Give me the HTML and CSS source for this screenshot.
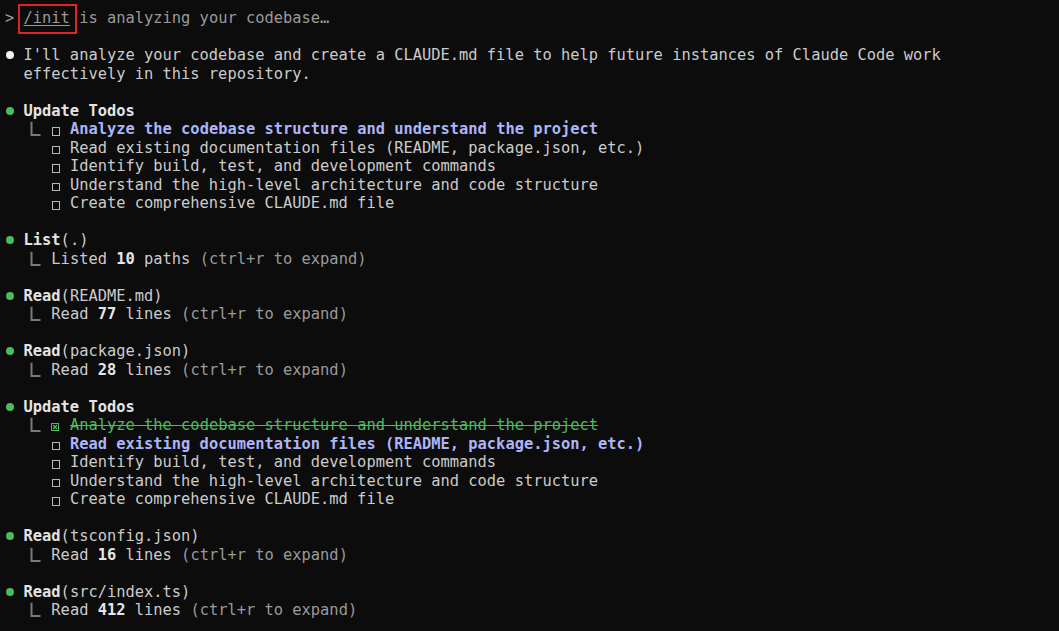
FILE: index.html
```html
<!DOCTYPE html>
<html>
<head>
<meta charset="utf-8">
<link rel="stylesheet" href="styles.css">
</head>
<body>
<main class="term">
  <section class="block">
    <div class="line dim">&gt; <span class="cmd">/init</span> is analyzing your codebase…</div>
  </section>

  <section class="block">
    <div class="line text"><span class="dot white"></span>I'll analyze your codebase and create a CLAUDE.md file to help future instances of Claude Code work</div>
    <div class="line text">  effectively in this repository.</div>
  </section>

  <section class="block">
    <div class="line"><span class="dot green"></span><b class="head">Update Todos</b></div>
    <div class="line text">  <svg class="elbow" viewBox="0 0 9.27 18.5"><path d="M7.5 1.7 V15 H16.5"/></svg>  <span class="box"></span> <b class="active">Analyze the codebase structure and understand the project</b></div>
    <div class="line text">     <span class="box"></span> Read existing documentation files (README, package.json, etc.)</div>
    <div class="line text">     <span class="box"></span> Identify build, test, and development commands</div>
    <div class="line text">     <span class="box"></span> Understand the high-level architecture and code structure</div>
    <div class="line text">     <span class="box"></span> Create comprehensive CLAUDE.md file</div>
  </section>

  <section class="block">
    <div class="line text"><span class="dot green"></span><b class="head">List</b>(.)</div>
    <div class="line text">  <svg class="elbow" viewBox="0 0 9.27 18.5"><path d="M7.5 1.7 V15 H16.5"/></svg>  Listed <b class="num">10</b> paths <span class="dim">(ctrl+r to expand)</span></div>
  </section>

  <section class="block">
    <div class="line text"><span class="dot green"></span><b class="head">Read</b>(README.md)</div>
    <div class="line text">  <svg class="elbow" viewBox="0 0 9.27 18.5"><path d="M7.5 1.7 V15 H16.5"/></svg>  Read <b class="num">77</b> lines <span class="dim">(ctrl+r to expand)</span></div>
  </section>

  <section class="block">
    <div class="line text"><span class="dot green"></span><b class="head">Read</b>(package.json)</div>
    <div class="line text">  <svg class="elbow" viewBox="0 0 9.27 18.5"><path d="M7.5 1.7 V15 H16.5"/></svg>  Read <b class="num">28</b> lines <span class="dim">(ctrl+r to expand)</span></div>
  </section>

  <section class="block">
    <div class="line"><span class="dot green"></span><b class="head">Update Todos</b></div>
    <div class="line text">  <svg class="elbow" viewBox="0 0 9.27 18.5"><path d="M7.5 1.7 V15 H16.5"/></svg>  <svg class="checked" viewBox="0 0 8 8"><rect x="0.5" y="0.5" width="7" height="7"/><path d="M2 2 L6 6 M6 2 L2 6"/></svg> <span class="done">Analyze the codebase structure and understand the project</span></div>
    <div class="line text">     <span class="box"></span> <b class="active">Read existing documentation files (README, package.json, etc.)</b></div>
    <div class="line text">     <span class="box"></span> Identify build, test, and development commands</div>
    <div class="line text">     <span class="box"></span> Understand the high-level architecture and code structure</div>
    <div class="line text">     <span class="box"></span> Create comprehensive CLAUDE.md file</div>
  </section>

  <section class="block">
    <div class="line text"><span class="dot green"></span><b class="head">Read</b>(tsconfig.json)</div>
    <div class="line text">  <svg class="elbow" viewBox="0 0 9.27 18.5"><path d="M7.5 1.7 V15 H16.5"/></svg>  Read <b class="num">16</b> lines <span class="dim">(ctrl+r to expand)</span></div>
  </section>

  <section class="block">
    <div class="line text"><span class="dot green"></span><b class="head">Read</b>(src/index.ts)</div>
    <div class="line text">  <svg class="elbow" viewBox="0 0 9.27 18.5"><path d="M7.5 1.7 V15 H16.5"/></svg>  Read <b class="num">412</b> lines <span class="dim">(ctrl+r to expand)</span></div>
  </section>
</main>
</body>
</html>
```

FILE: styles.css
```css
html, body {
  margin: 0;
  padding: 0;
  background: #0c0c0c;
  height: 100%;
  overflow: hidden;
}

.term {
  display: flex;
  flex-direction: column;
  gap: 18.5px;
  padding: 9px 5px;
  font-family: "DejaVu Sans Mono", "Liberation Mono", monospace;
  font-size: 15.4px;
  color: #c9c9c9;
}

.block {
  display: flex;
  flex-direction: column;
}

.line {
  height: 18.5px;
  line-height: 18.5px;
  white-space: pre;
}

.text {
  color: #cbcbcb;
}

.dim {
  color: #9a9a9a;
}

.cmd {
  position: relative;
  text-decoration: underline;
  text-underline-offset: 2px;
}

.cmd::after {
  content: "";
  position: absolute;
  left: -6px;
  right: -7px;
  top: -5px;
  bottom: -7px;
  border: 2px solid #e0241f;
}

.dot {
  display: inline-block;
  width: 2ch;
  height: 18.5px;
  vertical-align: top;
  position: relative;
}

.dot::before {
  content: "";
  position: absolute;
  left: 1px;
  top: 5px;
  width: 8px;
  height: 8px;
  border-radius: 50%;
}

.dot.white::before {
  background: #f2f2f2;
}

.dot.green::before {
  background: #4cbb5e;
}

b {
  font-weight: bold;
}

.head {
  color: #e4e4e4;
}

.num {
  color: #e6e6e6;
}

.active {
  color: #adb4f7;
}

.done {
  color: #4cbb5e;
  text-decoration: line-through;
}

.elbow {
  display: inline-block;
  width: 1ch;
  height: 18.5px;
  vertical-align: top;
  overflow: visible;
}

.elbow path {
  fill: none;
  stroke: #7a7a7a;
  stroke-width: 2;
}

.box {
  display: inline-block;
  width: 1ch;
  height: 18.5px;
  vertical-align: top;
  position: relative;
}

.box::before {
  content: "";
  position: absolute;
  left: 0.5px;
  top: 7px;
  width: 6.5px;
  height: 6.5px;
  border: 1px solid #b8b8b8;
}

.checked {
  display: inline-block;
  width: 8px;
  height: 8px;
  margin-right: calc(1ch - 8px);
  vertical-align: -1px;
}

.checked rect {
  fill: none;
  stroke: #4cbb5e;
  stroke-width: 1;
}

.checked path {
  stroke: #4cbb5e;
  stroke-width: 1.2;
}
```
